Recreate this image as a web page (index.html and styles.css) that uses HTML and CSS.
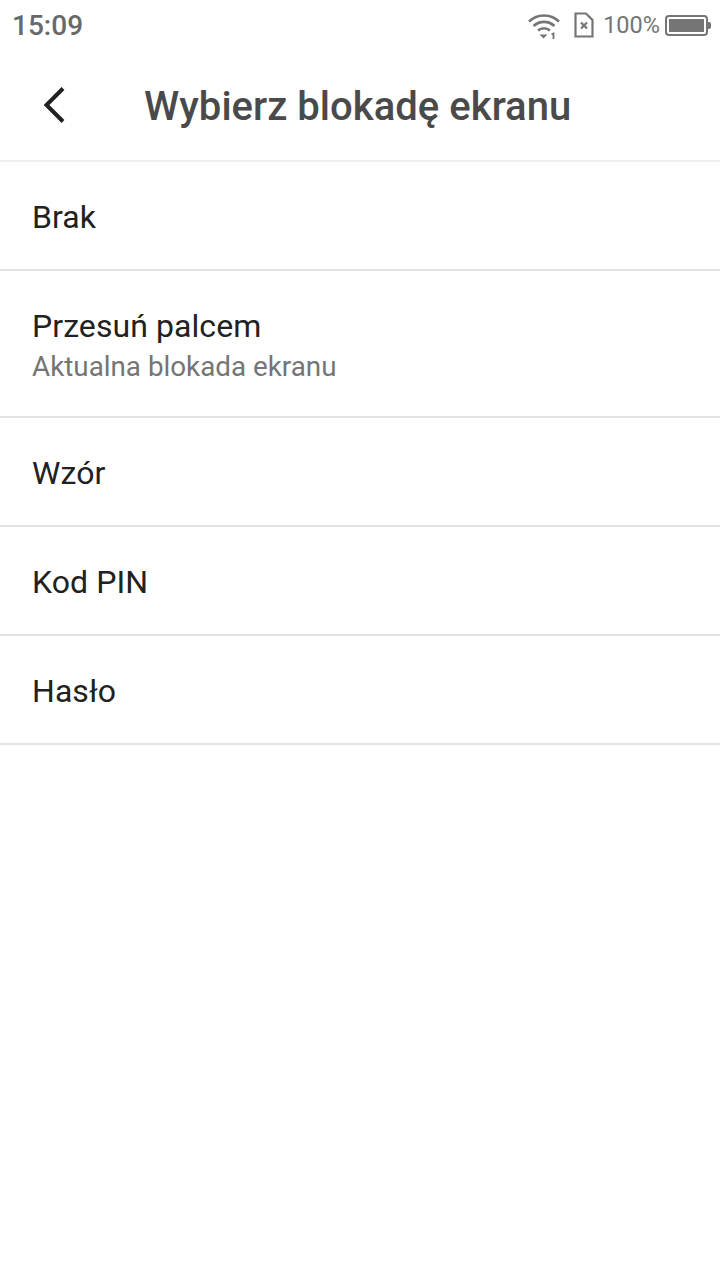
FILE: index.html
```html
<!DOCTYPE html>
<html lang="pl">
<head>
    <meta charset="UTF-8">
    <meta name="viewport" content="width=device-width, initial-scale=1.0">
    <title>Wybierz blokadę ekranu</title>
    <link rel="stylesheet" href="styles.css">
</head>
<body>
    <div class="status-bar">
        <span class="clock">15:09</span>
        <div class="status-icons">
            <svg class="icon-wifi" width="34" height="28" viewBox="0 0 34 28">
                <path d="M2 10.500C10.500 2.500 23.500 2.500 32 10.500" fill="none" stroke="#757575" stroke-width="2.600"/>
                <path d="M6.500 15C12.500 9.500 21.500 9.500 27.500 15" fill="none" stroke="#757575" stroke-width="2.600"/>
                <path d="M11 19.500C14.500 16.500 19.500 16.500 23 19.500" fill="none" stroke="#757575" stroke-width="2.600"/>
                <path d="M12.500 23.500H20.500L16.500 27.500Z" fill="#757575"/>
                <path d="M24.500 23.500L26.500 22.500V28" fill="none" stroke="#757575" stroke-width="1.800"/>
            </svg>
            <svg class="icon-sim" width="20" height="26" viewBox="0 0 20 26">
                <path d="M1.500 1.500H12L18.500 8V24.500H1.500Z" fill="none" stroke="#757575" stroke-width="2.200"/>
                <path d="M7 10.500L13 16.500M13 10.500L7 16.500" fill="none" stroke="#757575" stroke-width="2.200"/>
            </svg>
            <span class="battery-text">100%</span>
            <div class="battery">
                <div class="battery-body"><div class="battery-fill"></div></div>
                <div class="battery-tip"></div>
            </div>
        </div>
    </div>

    <div class="toolbar">
        <svg class="back" width="24" height="38" viewBox="0 0 24 38">
            <path d="M21 2.500L4.500 19L21 35.500" fill="none" stroke="#212121" stroke-width="4"/>
        </svg>
        <h1>Wybierz blokadę ekranu</h1>
    </div>

    <div class="list">
        <div class="row"><div class="row-title">Brak</div></div>
        <div class="row row-tall">
            <div class="row-title">Przesuń palcem</div>
            <div class="row-sub">Aktualna blokada ekranu</div>
        </div>
        <div class="row"><div class="row-title">Wzór</div></div>
        <div class="row"><div class="row-title">Kod PIN</div></div>
        <div class="row"><div class="row-title">Hasło</div></div>
    </div>
</body>
</html>
```

FILE: styles.css
```css
body {
    font-family: Roboto, sans-serif;
    background-color: #fff;
    margin: 0;
    padding: 0;
}
.status-bar {
    height: 50px;
    display: flex;
    justify-content: space-between;
    align-items: center;
    padding: 0 9px 0 12px;
    box-sizing: border-box;
}
.clock {
    font-size: 28px;
    font-weight: 500;
    color: #696969;
}
.status-icons {
    display: flex;
    align-items: center;
}
.icon-wifi {
    margin-right: 13px;
}
.icon-sim {
    margin-right: 9px;
}
.battery-text {
    font-size: 23.5px;
    color: #757575;
    margin-right: 5px;
}
.battery {
    display: flex;
    align-items: center;
}
.battery-body {
    width: 43px;
    height: 21px;
    box-sizing: border-box;
    border: 2px solid #757575;
    border-radius: 4px;
    padding: 2px;
}
.battery-fill {
    height: 100%;
    background-color: #757575;
}
.battery-tip {
    width: 3px;
    height: 7px;
    background-color: #757575;
    border-radius: 0 2px 2px 0;
}
.toolbar {
    height: 112px;
    display: flex;
    align-items: center;
    box-sizing: border-box;
    border-bottom: 2px solid #eee;
    padding: 0 0 1px 42px;
}
.back {
    margin-right: 78px;
}
h1 {
    margin: 0;
    padding-top: 4px;
    font-size: 40px;
    font-weight: 500;
    letter-spacing: 0.03px;
    color: #4a4a4a;
}
.row {
    height: 109px;
    box-sizing: border-box;
    border-bottom: 2px solid #e4e4e4;
    padding: 2px 32px 0;
    display: flex;
    flex-direction: column;
    justify-content: center;
}
.row-tall {
    height: 147px;
    padding-top: 0;
}
.row-title {
    font-size: 32px;
    letter-spacing: 0.07px;
    color: #212121;
}
.row-sub {
    font-size: 27.8px;
    margin-top: 5px;
    margin-bottom: -2px;
    color: #757575;
}
```
